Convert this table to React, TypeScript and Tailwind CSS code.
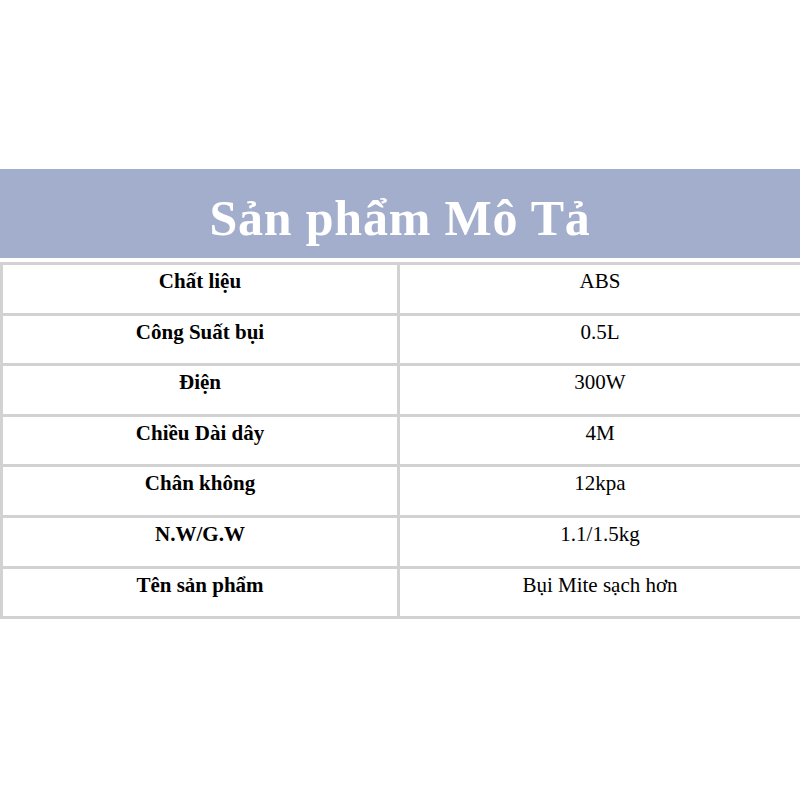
const rows: [string, string][] = [
  ["Chất liệu", "ABS"],
  ["Công Suất bụi", "0.5L"],
  ["Điện", "300W"],
  ["Chiều Dài dây", "4M"],
  ["Chân không", "12kpa"],
  ["N.W/G.W", "1.1/1.5kg"],
  ["Tên sản phẩm", "Bụi Mite sạch hơn"],
]

export default function App() {
  return (
    <div
      className="w-[800px] h-[800px] bg-white pt-[169px]"
      style={{ fontFamily: '"Liberation Serif", "Times New Roman", serif' }}
    >
      <div className="h-[89px] bg-[#a3adcc] flex items-center justify-center pt-[9px]">
        <h1 className="text-white font-bold text-[50px] leading-none tracking-[0.8px]">Sản phẩm Mô Tả</h1>
      </div>
      <div className="mt-[4px] border-t-[3px] border-l-[3px] border-[#d2d2d2]">
        {rows.map(([label, value]) => (
          <div key={label} className="grid grid-cols-[397px_1fr] h-[50.6px] border-b-[3px] border-[#d2d2d2]">
            <div className="border-r-[3px] border-[#d2d2d2] flex justify-center pt-[1px] font-bold text-[21px] text-black">
              {label}
            </div>
            <div className="flex justify-center pt-[1px] text-[21px] text-black">{value}</div>
          </div>
        ))}
      </div>
    </div>
  )
}
